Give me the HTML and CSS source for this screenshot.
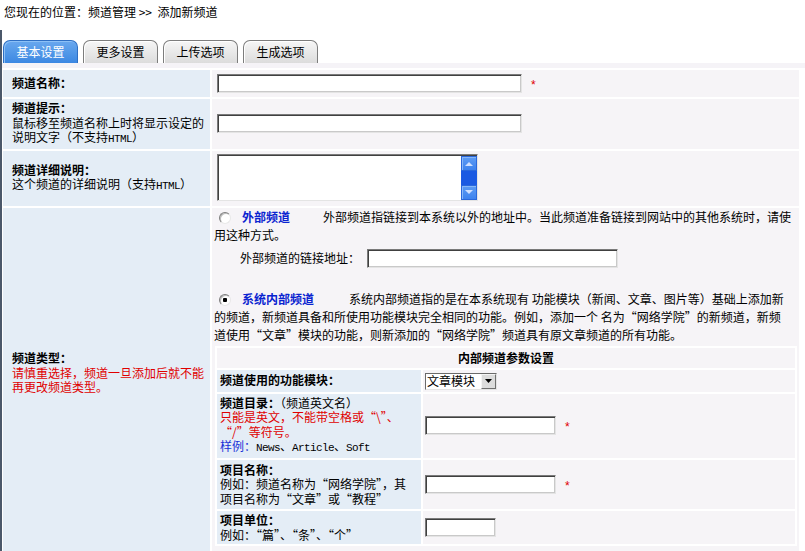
FILE: index.html
```html
<!DOCTYPE html>
<html lang="zh-CN">
<head>
<meta charset="utf-8">
<title>添加新频道</title>
<link rel="stylesheet" href="styles.css">
</head>
<body>
<div class="crumb">您现在的位置：频道管理 &gt;&gt;&nbsp;&nbsp;添加新频道</div>
<div class="panel">
  <div class="tabs">
    <div class="tab active">基本设置</div>
    <div class="tab">更多设置</div>
    <div class="tab">上传选项</div>
    <div class="tab">生成选项</div>
  </div>
  <div class="form">
    <div class="lbl"><div><b>频道名称：</b></div></div>
    <div class="val"><input class="txt w305" type="text"><span class="req">*</span></div>

    <div class="lbl"><div><b>频道提示：</b><br>鼠标移至频道名称上时将显示设定的<br>说明文字（不支持<span class="en">HTML</span>）</div></div>
    <div class="val"><input class="txt w305" type="text"></div>

    <div class="lbl"><div><b>频道详细说明：</b><br>这个频道的详细说明（支持<span class="en">HTML</span>）</div></div>
    <div class="val tall">
      <div class="ta">
        <textarea></textarea>
        <div class="sb">
          <span class="sb-btn"><svg width="8" height="5" viewBox="0 0 8 5"><path d="M0 5L4 1L8 5Z" fill="#cfe0ff"/></svg></span>
          <span class="sb-track"></span>
          <span class="sb-btn"><svg width="8" height="5" viewBox="0 0 8 5"><path d="M0 0L4 4L8 0Z" fill="#cfe0ff"/></svg></span>
        </div>
      </div>
    </div>

    <div class="lbl type"><div><b>频道类型：</b><br><span class="red">请慎重选择，频道一旦添加后就不能<br>再更改频道类型。</span></div></div>
    <div class="val block">
      <p class="opt"><input type="radio" name="kind" class="radio"><b class="blue">外部频道</b><span class="desc1">外部频道指链接到本系统以外的地址中。当此频道准备链接到网站中的其他系统时，请使</span><br>用这种方式。</p>
      <div class="link-row">外部频道的链接地址：<input class="txt w250" type="text"></div>
      <p class="opt opt2"><input type="radio" name="kind" class="radio" checked><b class="blue">系统内部频道</b><span class="desc2">系统内部频道指的是在本系统现有 功能模块（新闻、文章、图片等）基础上添加新</span><br>的频道，新频道具备和所使用功能模块完全相同的功能。例如，添加一个 名为“网络学院”的新频道，新频<br>道使用“文章”模块的功能，则新添加的“网络学院”频道具有原文章频道的所有功能。</p>
      <div class="inner">
        <div class="ihead">内部频道参数设置</div>

        <div class="ilbl"><div><b>频道使用的功能模块：</b></div></div>
        <div class="ival"><span class="sel"><select><option>文章模块</option></select><span class="sel-btn"><svg width="7" height="4" viewBox="0 0 7 4"><path d="M0 0H7L3.5 4Z" fill="#000"/></svg></span></span></div>

        <div class="ilbl"><div><b>频道目录：</b>（频道英文名）<br><span class="red">只能是英文，不能带空格或“\”、<br>“/”等符号。</span><br><span class="blue2">样例：</span><span class="en">News</span>、<span class="en">Article</span>、<span class="en">Soft</span></div></div>
        <div class="ival"><input class="txt w130" type="text"><span class="req">*</span></div>

        <div class="ilbl pad"><div><b>项目名称：</b><br>例如：频道名称为“网络学院”，其<br>项目名称为“文章”或“教程”</div></div>
        <div class="ival"><input class="txt w130" type="text"><span class="req">*</span></div>

        <div class="ilbl"><div><b>项目单位：</b><br>例如：“篇”、“条”、“个”</div></div>
        <div class="ival"><input class="txt w70" type="text"></div>
      </div>
    </div>
  </div>
</div>
</body>
</html>
```

FILE: styles.css
```css
* { box-sizing: border-box; }

body {
  margin: 0;
  font-family: "Noto Sans CJK SC", sans-serif;
  font-size: 12px;
  line-height: 1.2;
  color: #000;
  background: #fff;
}

.crumb {
  height: 22px;
  line-height: 23px;
  padding-left: 4px;
  white-space: nowrap;
}

.panel {
  margin-top: 8px;
  padding-top: 10px;
  border-left: 2px solid #4b586a;
}

.tabs {
  display: flex;
  gap: 5px;
  padding-left: 1px;
  height: 23px;
}

.tab {
  width: 75px;
  height: 23px;
  line-height: 22px;
  text-align: center;
  border: 1px solid #7d7d7d;
  border-bottom: none;
  border-radius: 7px 7px 0 0;
  background: linear-gradient(#f6f6f6, #dcdcdc);
  box-shadow: inset 1px 1px 0 #fff;
  color: #000;
}

.tab.active {
  background: linear-gradient(#69a8ee, #3c88e2);
  border-color: #2e6fc4;
  box-shadow: inset 1px 1px 0 #8cc0f6;
  color: #fff;
}

.form {
  display: grid;
  grid-template-columns: 207px 1fr;
  gap: 2px;
  background: #fff;
  border-top: 5px solid #f5f3f7;
  padding: 2px 6px 0 1px;
}

.lbl {
  background: #e4edf6;
  padding: 2px 4px 2px 9px;
  line-height: 14.5px;
  display: flex;
  align-items: center;
}

.lbl.type { padding-bottom: 18px; }

.val {
  background: #f6f4f7;
  padding: 4px 5px;
  display: flex;
  align-items: center;
}

.val.tall { padding: 3px 5px 5px; }

.val.block {
  display: block;
  padding: 0 2px 8px;
}

.txt {
  height: 19px;
  border: 1px solid;
  border-color: #7a7a7a #e4e4e4 #e4e4e4 #7a7a7a;
  box-shadow: inset 1px 1px 0 #404040, inset -1px -1px 0 #c9c9c9;
  background: #fff;
  padding: 0 3px;
  font: inherit;
  margin: 0;
}

.w305 { width: 305px; }
.w250 { width: 251px; }
.w130 { width: 131px; }
.w70 { width: 71px; }

.req {
  color: #e00000;
  margin-left: 9px;
  padding-top: 4px;
  font-family: "Liberation Sans", sans-serif;
  font-size: 12px;
}

.en {
  font-family: "Liberation Mono", monospace;
  font-size: 11px;
  letter-spacing: -0.6px;
}

.red { color: #e00000; }
.blue { color: #0a24d0; }
.blue2 { color: #1a32d8; }

/* textarea with XP style scrollbar */
.ta {
  display: flex;
  width: 261px;
  height: 47px;
  border: 1px solid;
  border-color: #7a7a7a #e4e4e4 #e4e4e4 #7a7a7a;
  box-shadow: inset 1px 1px 0 #404040;
  background: #fff;
  padding: 1px 0 0 1px;
}

.ta textarea {
  flex: 1;
  border: none;
  resize: none;
  background: transparent;
  font: inherit;
  padding: 1px 2px;
  outline: none;
}

.sb {
  width: 16px;
  display: flex;
  flex-direction: column;
  background: #1f5fe0;
}

.sb-btn {
  height: 15px;
  display: flex;
  align-items: center;
  justify-content: center;
  background: linear-gradient(#5d9cf4, #3d82ee);
  border: 1px solid #2a68dc;
  box-shadow: inset 1px 1px 0 #86b6f8;
}

.sb-track {
  flex: 1;
  background: #1b5ae2;
}

/* channel type cell */
.opt {
  margin: 0;
  line-height: 18px;
  white-space: nowrap;
}

.opt2 { margin-top: 22px; }

.radio {
  appearance: none;
  -webkit-appearance: none;
  width: 12px;
  height: 12px;
  margin: 0 11px 0 5px;
  vertical-align: -2px;
  border-radius: 50%;
  border: 1px solid;
  border-color: #7d7d7d #e8e8e8 #e8e8e8 #7d7d7d;
  background: #fff;
  box-shadow: inset 1px 1px 0 #bdbdbd;
}

.radio:checked {
  background: radial-gradient(circle, #000 0 2px, #fff 2.5px);
}

.desc1 { margin-left: 33px; }
.desc2 { margin-left: 35px; }

.link-row {
  margin-top: 5px;
  padding-left: 26px;
  display: flex;
  align-items: center;
  gap: 7px;
}

.inner {
  margin: 2px 0 0 1px;
  display: grid;
  grid-template-columns: 204px 1fr;
  gap: 2px;
  padding: 2px;
  background: #fff;
}

.ihead {
  grid-column: 1 / -1;
  background: #f6f4f7;
  text-align: center;
  font-weight: bold;
  height: 20px;
  line-height: 20px;
}

.ilbl {
  background: #e4edf6;
  padding: 2px 3px;
  line-height: 14.5px;
  display: flex;
  align-items: center;
}

.ilbl.pad { padding: 3px 3px; }

.ival {
  background: #f6f4f7;
  padding: 2px;
  display: flex;
  align-items: center;
}

.sel {
  display: inline-flex;
  align-items: stretch;
  width: 72px;
  height: 17px;
  margin-top: 1px;
  border: 1px solid;
  border-color: #6a6a6a #e4e4e4 #e4e4e4 #6a6a6a;
  background: #fff;
}

.sel select {
  appearance: none;
  -webkit-appearance: none;
  flex: 1;
  min-width: 0;
  border: none;
  background: #fff;
  font: inherit;
  padding: 0 1px;
  margin: 0;
  color: #000;
  outline: none;
}

.sel-btn {
  width: 15px;
  display: flex;
  align-items: center;
  justify-content: center;
  background: #dcdcdc;
  border: 1px solid;
  border-color: #f4f4f4 #6f6f6f #6f6f6f #f4f4f4;
}
```
